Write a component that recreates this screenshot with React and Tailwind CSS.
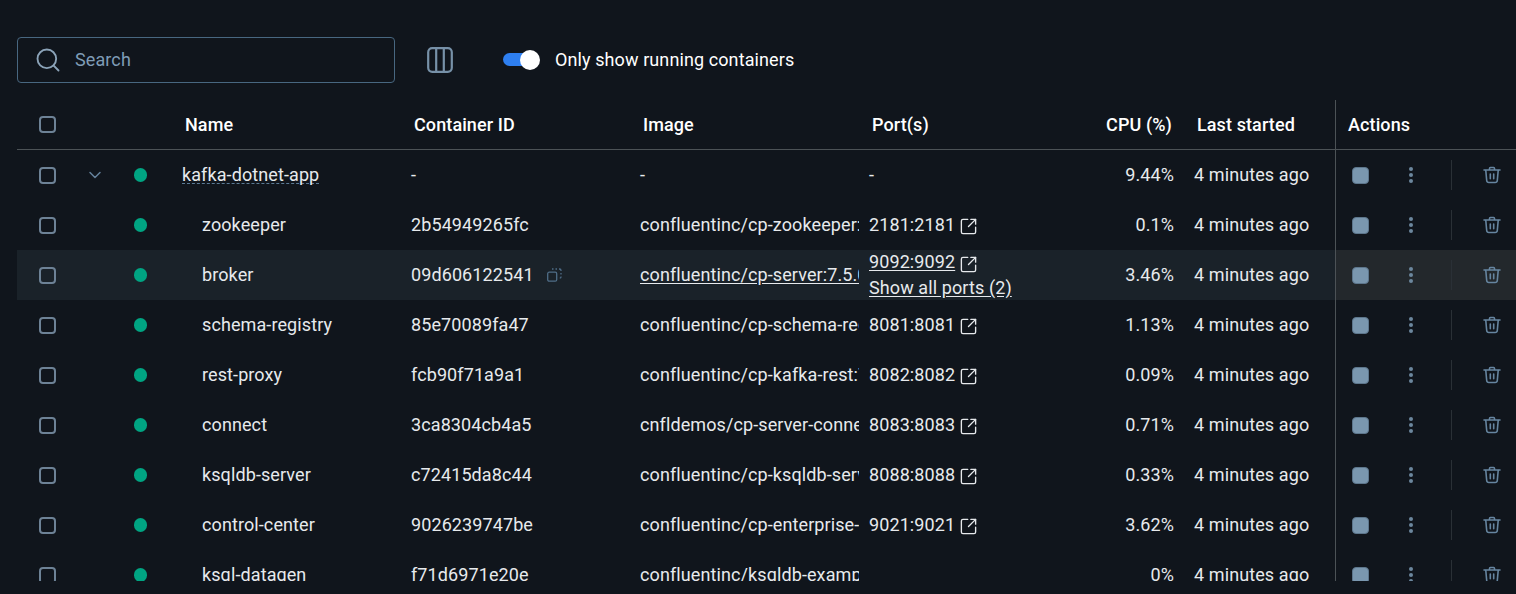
import { ChevronDown, Search, SquareArrowOutUpRight } from 'lucide-react';

const ROWS = [
  { name: 'zookeeper', id: '2b54949265fc', image: 'confluentinc/cp-zookeeper:7.5.0', port: '2181:2181', cpu: '0.1%' },
  { name: 'broker', id: '09d606122541', image: 'confluentinc/cp-server:7.5.0', port: '9092:9092', cpu: '3.46%', hover: true },
  { name: 'schema-registry', id: '85e70089fa47', image: 'confluentinc/cp-schema-registry:7.5.0', port: '8081:8081', cpu: '1.13%' },
  { name: 'rest-proxy', id: 'fcb90f71a9a1', image: 'confluentinc/cp-kafka-rest:7.5.0', port: '8082:8082', cpu: '0.09%' },
  { name: 'connect', id: '3ca8304cb4a5', image: 'cnfldemos/cp-server-connect-datagen', port: '8083:8083', cpu: '0.71%' },
  { name: 'ksqldb-server', id: 'c72415da8c44', image: 'confluentinc/cp-ksqldb-server:7.5.0', port: '8088:8088', cpu: '0.33%' },
  { name: 'control-center', id: '9026239747be', image: 'confluentinc/cp-enterprise-control-center', port: '9021:9021', cpu: '3.62%' },
  { name: 'ksql-datagen', id: 'f71d6971e20e', image: 'confluentinc/ksqldb-examples:7.5.0', port: '', cpu: '0%' },
];

const COLS = 'grid grid-cols-[60px_48px_57px_229px_229px_229px_205px_100px_161px_181px]';

function Checkbox() {
  return <div className="ml-[22px] h-[17px] w-[17px] rounded-[4px] border-2 border-[#6d8296]" />;
}

function ColumnsIcon() {
  return (
    <svg width="26" height="26" viewBox="0 0 26 26" fill="none" stroke="#7791a8" strokeWidth="2.2">
      <rect x="1.2" y="1.2" width="23.6" height="23.6" rx="4" />
      <path d="M9.2 1.2v23.6M16.8 1.2v23.6" />
    </svg>
  );
}

function CopyIcon() {
  return (
    <svg width="15" height="14" viewBox="0 0 15 14" fill="none" stroke="#4f6d87" strokeWidth="1.3">
      <rect x="0.7" y="4.2" width="9" height="9" rx="1.5" />
      <path d="M5 1h1.5M8.5 1H10M12 1h.5q1.5 0 1.5 1.5V3M14 5v1.5M14 8.5v.5q0 1-1.2 1" />
    </svg>
  );
}

function TrashIcon() {
  return (
    <svg width="18" height="18" viewBox="0 0 18 18" fill="none" stroke="#6685a0" strokeWidth="1.6" strokeLinecap="round">
      <path d="M1 4h16M6.5 3.8V2.4q0-.9.9-.9h3.2q.9 0 .9.9v1.4" />
      <path d="M2.8 4.5l.9 10q.2 2 2.2 2h6.2q2 0 2.2-2l.9-10" />
      <path d="M7.3 8v4.8M10.7 8v4.8" />
    </svg>
  );
}

function Actions({ hover }) {
  return (
    <div className={`flex h-full items-center border-l border-[#4c5256] ${hover ? 'bg-[#23282c]' : ''}`}>
      <div className="ml-4 h-[17px] w-[17px] rounded-[4px] border border-[#5d768c] bg-[#7a97af]" />
      <div className="ml-10 flex w-[4px] flex-col gap-[2px]">
        <span className="h-1 w-1 rounded-full bg-[#6c879e]" />
        <span className="h-1 w-1 rounded-full bg-[#6c879e]" />
        <span className="h-1 w-1 rounded-full bg-[#6c879e]" />
      </div>
      <div className="ml-[38px] h-[30px] w-px bg-[#2a3036]" />
      <div className="ml-[31px]">
        <TrashIcon />
      </div>
    </div>
  );
}

function PortLink({ port, underline }) {
  return (
    <div className="flex items-center">
      <span className={underline ? 'underline underline-offset-2' : ''}>{port}</span>
      <SquareArrowOutUpRight className="ml-1 mt-1 h-[19px] w-[19px] text-[#e6e9ec]" strokeWidth={1.7} />
    </div>
  );
}

function Row({ row }) {
  return (
    <div className={`${COLS} h-[50px] shrink-0 grid-rows-[50px] items-center ${row.hover ? 'bg-[#1a2229]' : ''}`}>
      <Checkbox />
      <div />
      <div className="ml-[8.5px] h-[13.5px] w-[13.5px] rounded-full bg-[#00a482]" />
      <div className="pb-px pl-5">{row.name}</div>
      <div className="flex items-center pb-px">
        {row.id}
        {row.hover && (
          <span className="ml-[13px]">
            <CopyIcon />
          </span>
        )}
      </div>
      <div className={`w-[219px] overflow-hidden whitespace-nowrap pb-px ${row.hover ? 'underline underline-offset-2' : ''}`}>{row.image}</div>
      <div className={`leading-[26px] ${row.hover ? '' : 'pb-px'}`}>
        {row.port && <PortLink port={row.port} underline={row.hover} />}
        {row.hover && <div className="underline underline-offset-2">Show all ports (2)</div>}
      </div>
      <div className="pb-px text-right">{row.cpu}</div>
      <div className="pb-px pl-5">4 minutes ago</div>
      <Actions hover={row.hover} />
    </div>
  );
}

export default function App() {
  return (
    <div className="h-[594px] overflow-hidden bg-[#10151c] pl-[17px] text-[18px] tracking-[0.1px] text-[#e7eaed] font-['Roboto',sans-serif]">
      {/* Toolbar */}
      <div className="flex h-[100px] items-start pt-[37px]">
        <div className="flex h-[46px] w-[378px] items-center rounded-[4px] border border-[#486780] pl-[15.5px]">
          <Search className="h-7 w-7 text-[#8ba3b8]" strokeWidth={1.6} />
          <span className="ml-[13.5px] pb-px text-[#7f9cb6]">Search</span>
        </div>
        <div className="ml-8 mt-[10px]">
          <ColumnsIcon />
        </div>
        <div className="relative ml-[50px] mt-4 h-[13px] w-[27px] rounded-l-full bg-[#2e7ff1]">
          <span className="absolute -right-[10px] -top-[3.5px] h-5 w-5 rounded-full bg-white" />
        </div>
        <span className="ml-[25px] mt-[9px] text-white">Only show running containers</span>
      </div>

      {/* Table */}
      <div className="flex h-[481px] flex-col overflow-hidden">
        <div className={`${COLS} h-[50px] shrink-0 items-center border-b border-[#4c5256] font-medium text-white`}>
          <Checkbox />
          <div />
          <div />
          <div className="pl-[3px]">Name</div>
          <div className="pl-[3px]">Container ID</div>
          <div className="pl-[3px]">Image</div>
          <div className="pl-[3px]">Port(s)</div>
          <div className="pr-[2px] text-right">CPU (%)</div>
          <div className="pl-[23px]">Last started</div>
          <div className="flex h-full items-center border-l border-[#4c5256] pl-3">Actions</div>
        </div>

        <div className={`${COLS} h-[50px] shrink-0 items-center`}>
          <Checkbox />
          <ChevronDown className="ml-2 h-5 w-5 text-[#64809a]" strokeWidth={1.8} />
          <div className="ml-[8.5px] h-[13.5px] w-[13.5px] rounded-full bg-[#00a482]" />
          <div className="w-fit border-b border-dashed border-[#5b7a94] leading-[16px]">kafka-dotnet-app</div>
          <div className="pb-px">-</div>
          <div className="pb-px">-</div>
          <div className="pb-px">-</div>
          <div className="pb-px text-right">9.44%</div>
          <div className="pb-px pl-5">4 minutes ago</div>
          <Actions />
        </div>

        {ROWS.map((row) => (
          <Row key={row.name} row={row} />
        ))}
      </div>
    </div>
  );
}
